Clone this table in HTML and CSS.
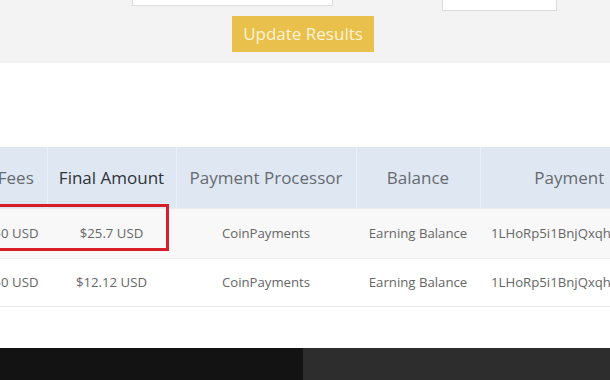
FILE: index.html
```html
<!DOCTYPE html>
<html lang="en">
<head>
<meta charset="utf-8">
<title>Withdrawal History</title>
<link rel="stylesheet" href="styles.css">
</head>
<body>
<div class="page">
  <section class="filters">
    <div class="filter-row">
      <div class="field field-date"></div>
      <div class="field field-status"></div>
    </div>
    <div class="actions">
      <button class="btn-update" type="button">Update Results</button>
    </div>
  </section>

  <section class="history">
    <div class="table-wrap">
      <table class="history-table">
        <colgroup>
          <col class="c-fees">
          <col class="c-final">
          <col class="c-proc">
          <col class="c-bal">
          <col class="c-pay">
        </colgroup>
        <thead>
          <tr>
            <th>Fees</th>
            <th class="sorted">Final Amount</th>
            <th>Payment Processor</th>
            <th>Balance</th>
            <th>Payment</th>
          </tr>
        </thead>
        <tbody>
          <tr class="odd">
            <td>$0 USD</td>
            <td>$25.7 USD</td>
            <td>CoinPayments</td>
            <td>Earning Balance</td>
            <td class="addr">1LHoRp5i1BnjQxqhZ7uTkWs9</td>
          </tr>
          <tr>
            <td>$0 USD</td>
            <td>$12.12 USD</td>
            <td>CoinPayments</td>
            <td>Earning Balance</td>
            <td class="addr">1LHoRp5i1BnjQxqhZ7uTkWs9</td>
          </tr>
        </tbody>
      </table>
      <div class="highlight"></div>
    </div>
  </section>

  <footer class="footer">
    <div class="footer-left"></div>
    <div class="footer-right"></div>
  </footer>
</div>
</body>
</html>
```
FILE: styles.css
```css
* { box-sizing: border-box; }

html, body {
  margin: 0;
  padding: 0;
}

body {
  width: 610px;
  height: 380px;
  overflow: hidden;
  background: #ffffff;
  font-family: "Open Sans", "Noto Sans", sans-serif;
}

.page {
  display: flex;
  flex-direction: column;
  height: 380px;
}

/* filter bar */
.filters {
  height: 63px;
  background: #f3f3f3;
  overflow: hidden;
  flex: none;
}

.filter-row {
  display: flex;
  align-items: flex-start;
  margin-top: -30px;
  height: 40px;
}

.field {
  background: #ffffff;
  border: 1px solid #dcdcdc;
}

.field-date {
  margin-left: 132px;
  width: 201px;
  height: 36px;
}

.field-status {
  margin-left: 109px;
  width: 115px;
  height: 41px;
}

.actions {
  display: flex;
  padding-left: 232px;
  margin-top: 6px;
}

.btn-update {
  width: 142px;
  height: 36px;
  border: 0;
  border-radius: 0;
  background: #e9c04b;
  color: #fdf4d6;
  font-family: "Open Sans", "Noto Sans", sans-serif;
  font-size: 17px;
  padding: 0;
  line-height: 36px;
}

/* history table */
.history {
  padding-top: 84px;
  flex: none;
}

.table-wrap {
  position: relative;
  overflow: hidden;
  width: 610px;
}

.history-table {
  margin-left: -15px;
  width: 673px;
  table-layout: fixed;
  border-collapse: collapse;
  border-spacing: 0;
}

.c-fees { width: 62px; }
.c-final { width: 129px; }
.c-proc { width: 180px; }
.c-bal { width: 124px; }
.c-pay { width: 178px; }

.history-table th {
  height: 61px;
  background: #dfe8f2;
  color: #666a70;
  font-weight: 400;
  font-size: 17px;
  text-align: center;
  white-space: nowrap;
  padding: 0;
  border-left: 1px solid #ecf1f7;
}

.history-table th:first-child { border-left: 0; }

.history-table th.sorted { color: #2f3338; }

.history-table td {
  height: 50px;
  padding: 0;
  text-align: center;
  font-size: 13.2px;
  color: #666666;
  white-space: nowrap;
  overflow: hidden;
  border-top: 1px solid #ececec;
}

.history-table tbody tr.odd td { background: #f8f8f8; }

.history-table tbody tr:last-child td {
  height: 48px;
  border-bottom: 1px solid #e8e8e8;
}

.history-table td.addr {
  text-align: left;
  padding-left: 11px;
}

/* marked row */
.highlight {
  position: absolute;
  left: -10px;
  top: 57px;
  width: 179px;
  height: 47px;
  border: 3px solid #d71f2b;
}

/* footer */
.footer {
  margin-top: auto;
  height: 32px;
  display: flex;
  flex: none;
}

.footer-left {
  width: 303px;
  background: #131313;
}

.footer-right {
  flex: 1;
  background: #2d2d2d;
}
```
